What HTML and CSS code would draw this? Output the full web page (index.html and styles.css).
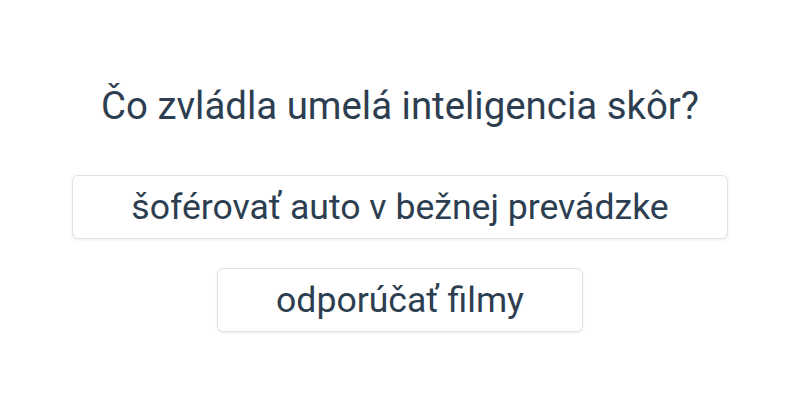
FILE: index.html
```html
<!DOCTYPE html>
<html lang="sk">
<head>
<meta charset="utf-8">
<link rel="stylesheet" href="styles.css">
</head>
<body>
<main class="quiz">
  <h1 class="question">Čo zvládla umelá inteligencia skôr?</h1>
  <div class="options">
    <button class="option">šoférovať auto v bežnej prevádzke</button>
    <button class="option">odporúčať filmy</button>
  </div>
</main>
</body>
</html>
```

FILE: styles.css
```css
html, body {
  margin: 0;
  padding: 0;
  background: #ffffff;
}
body {
  font-family: Roboto, "Noto Sans", sans-serif;
  color: #2c3e50;
  width: 800px;
  height: 400px;
}
.quiz {
  display: flex;
  flex-direction: column;
  align-items: center;
  padding-top: 82px;
}
.question {
  margin: 0;
  font-size: 38.4px;
  font-weight: 400;
  line-height: 48px;
}
.options {
  margin-top: 45px;
  display: flex;
  flex-direction: column;
  align-items: center;
  gap: 29px;
}
.option {
  font-family: Roboto, "Noto Sans", sans-serif;
  font-size: 35.6px;
  color: #2c3e50;
  background: #ffffff;
  border: 1px solid #e2e2e2;
  border-radius: 6px;
  box-shadow: 0 1px 3px rgba(0,0,0,0.08);
  padding: 0 58px;
  height: 64px;
  line-height: 62px;
  cursor: pointer;
}
```
